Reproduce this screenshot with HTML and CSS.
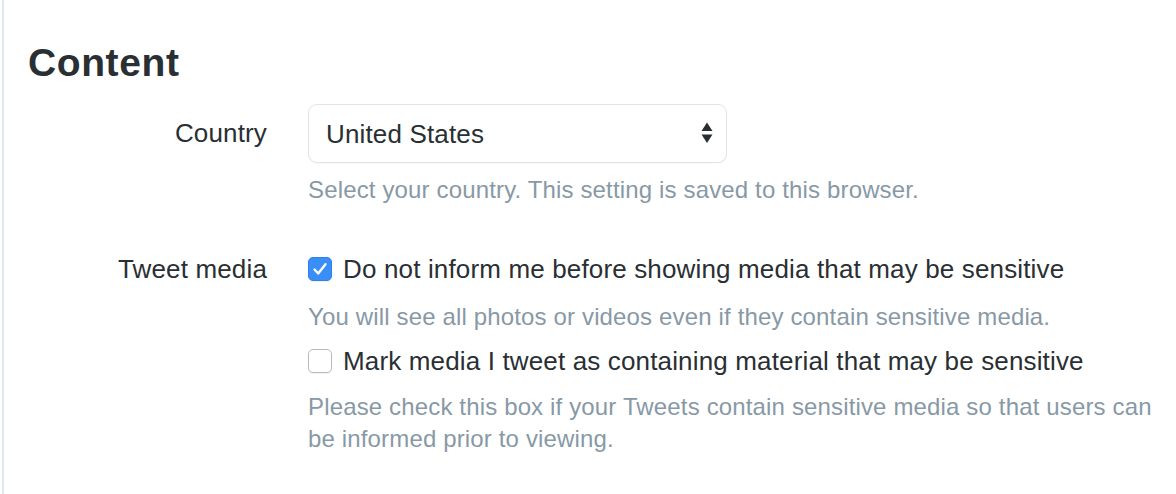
FILE: index.html
```html
<!DOCTYPE html>
<html lang="en">
<head>
<meta charset="utf-8">
<title>Content settings</title>
<link rel="stylesheet" href="styles.css">
</head>
<body>
<main class="panel">
  <h1 class="heading">Content</h1>
  <div class="form">
    <div class="label label-select">Country</div>
    <div class="control">
      <div class="select-wrap">
        <select class="select">
          <option>United States</option>
        </select>
        <svg class="select-arrows" width="12" height="22" viewBox="0 0 12 22" aria-hidden="true">
          <path d="M6 0.5 L11.5 9 L0.5 9 Z" fill="#2a2e33"/>
          <path d="M0.5 12.5 L11.5 12.5 L6 21 Z" fill="#2a2e33"/>
        </svg>
      </div>
      <p class="hint hint-first">Select your country. This setting is saved to this browser.</p>
    </div>

    <div class="label label-check row-gap">Tweet media</div>
    <div class="control row-gap">
      <label class="check">
        <span class="box box-on">
          <svg width="24" height="24" viewBox="0 0 24 24" aria-hidden="true">
            <path d="M6.5 12.5 L10.2 16.4 L17.5 7.2" fill="none" stroke="#fff" stroke-width="2.4" stroke-linecap="round" stroke-linejoin="round"/>
          </svg>
        </span>
        <span class="check-text">Do not inform me before showing media that may be sensitive</span>
      </label>
      <p class="hint hint-check">You will see all photos or videos even if they contain sensitive media.</p>
      <label class="check check-second">
        <span class="box"></span>
        <span class="check-text">Mark media I tweet as containing material that may be sensitive</span>
      </label>
      <p class="hint hint-last">Please check this box if your Tweets contain sensitive media so that users can be informed prior to viewing.</p>
    </div>
  </div>
</main>
</body>
</html>
```
FILE: styles.css
```css
html, body {
  margin: 0;
  padding: 0;
  background: #ffffff;
}

body {
  font-family: "Liberation Sans", Arial, sans-serif;
  color: #292f33;
}

.panel {
  margin-left: 2px;
  border-left: 2px solid #e1e8ed;
  min-height: 494px;
  box-sizing: border-box;
  padding: 41px 14px 0 24px;
}

.heading {
  margin: 0;
  font-size: 39px;
  line-height: 44px;
  font-weight: 700;
  color: #292f33;
  letter-spacing: 0.6px;
}

.form {
  margin-top: 19px;
  display: grid;
  grid-template-columns: 239px 1fr;
  column-gap: 41px;
  align-items: start;
}

.label {
  text-align: right;
  font-size: 26px;
  letter-spacing: 0.15px;
  color: #292f33;
}

.label-select {
  line-height: 59px;
}

.label-check {
  line-height: 32px;
}

.row-gap {
  margin-top: 47px;
}

.control {
  min-width: 0;
}

.select-wrap {
  position: relative;
  width: 419px;
}

.select {
  display: block;
  width: 419px;
  height: 59px;
  box-sizing: border-box;
  -webkit-appearance: none;
  appearance: none;
  border: 1px solid #dfe5ea;
  border-radius: 9px;
  background: #ffffff;
  padding: 0 40px 0 17px;
  font-family: "Liberation Sans", Arial, sans-serif;
  font-size: 26px;
  letter-spacing: 0.15px;
  color: #292f33;
  box-shadow: 0 1px 1px rgba(0, 0, 0, 0.03);
}

.select-arrows {
  position: absolute;
  right: 14px;
  top: 18px;
}

.hint {
  margin: 0;
  font-size: 24px;
  line-height: 32px;
  letter-spacing: 0.15px;
  color: #8899a6;
}

.hint-first {
  margin-top: 11px;
}

.hint-check {
  margin-top: 16px;
}

.hint-last {
  margin-top: 14px;
}

.check {
  display: flex;
  align-items: center;
  gap: 11px;
  font-size: 26px;
  line-height: 32px;
  letter-spacing: 0.15px;
  color: #292f33;
}

.check-second {
  margin-top: 12px;
}

.box {
  flex: none;
  width: 24px;
  height: 24px;
  box-sizing: border-box;
  border-radius: 5px;
  border: 1px solid #b9b9b9;
  background: #ffffff;
  box-shadow: 0 1px 1px rgba(0, 0, 0, 0.06);
  display: flex;
  align-items: center;
  justify-content: center;
}

.box svg {
  display: block;
  margin: -1px;
}

.box-on {
  background: #3a8ef7;
  border-color: #2f80ea;
}
```
